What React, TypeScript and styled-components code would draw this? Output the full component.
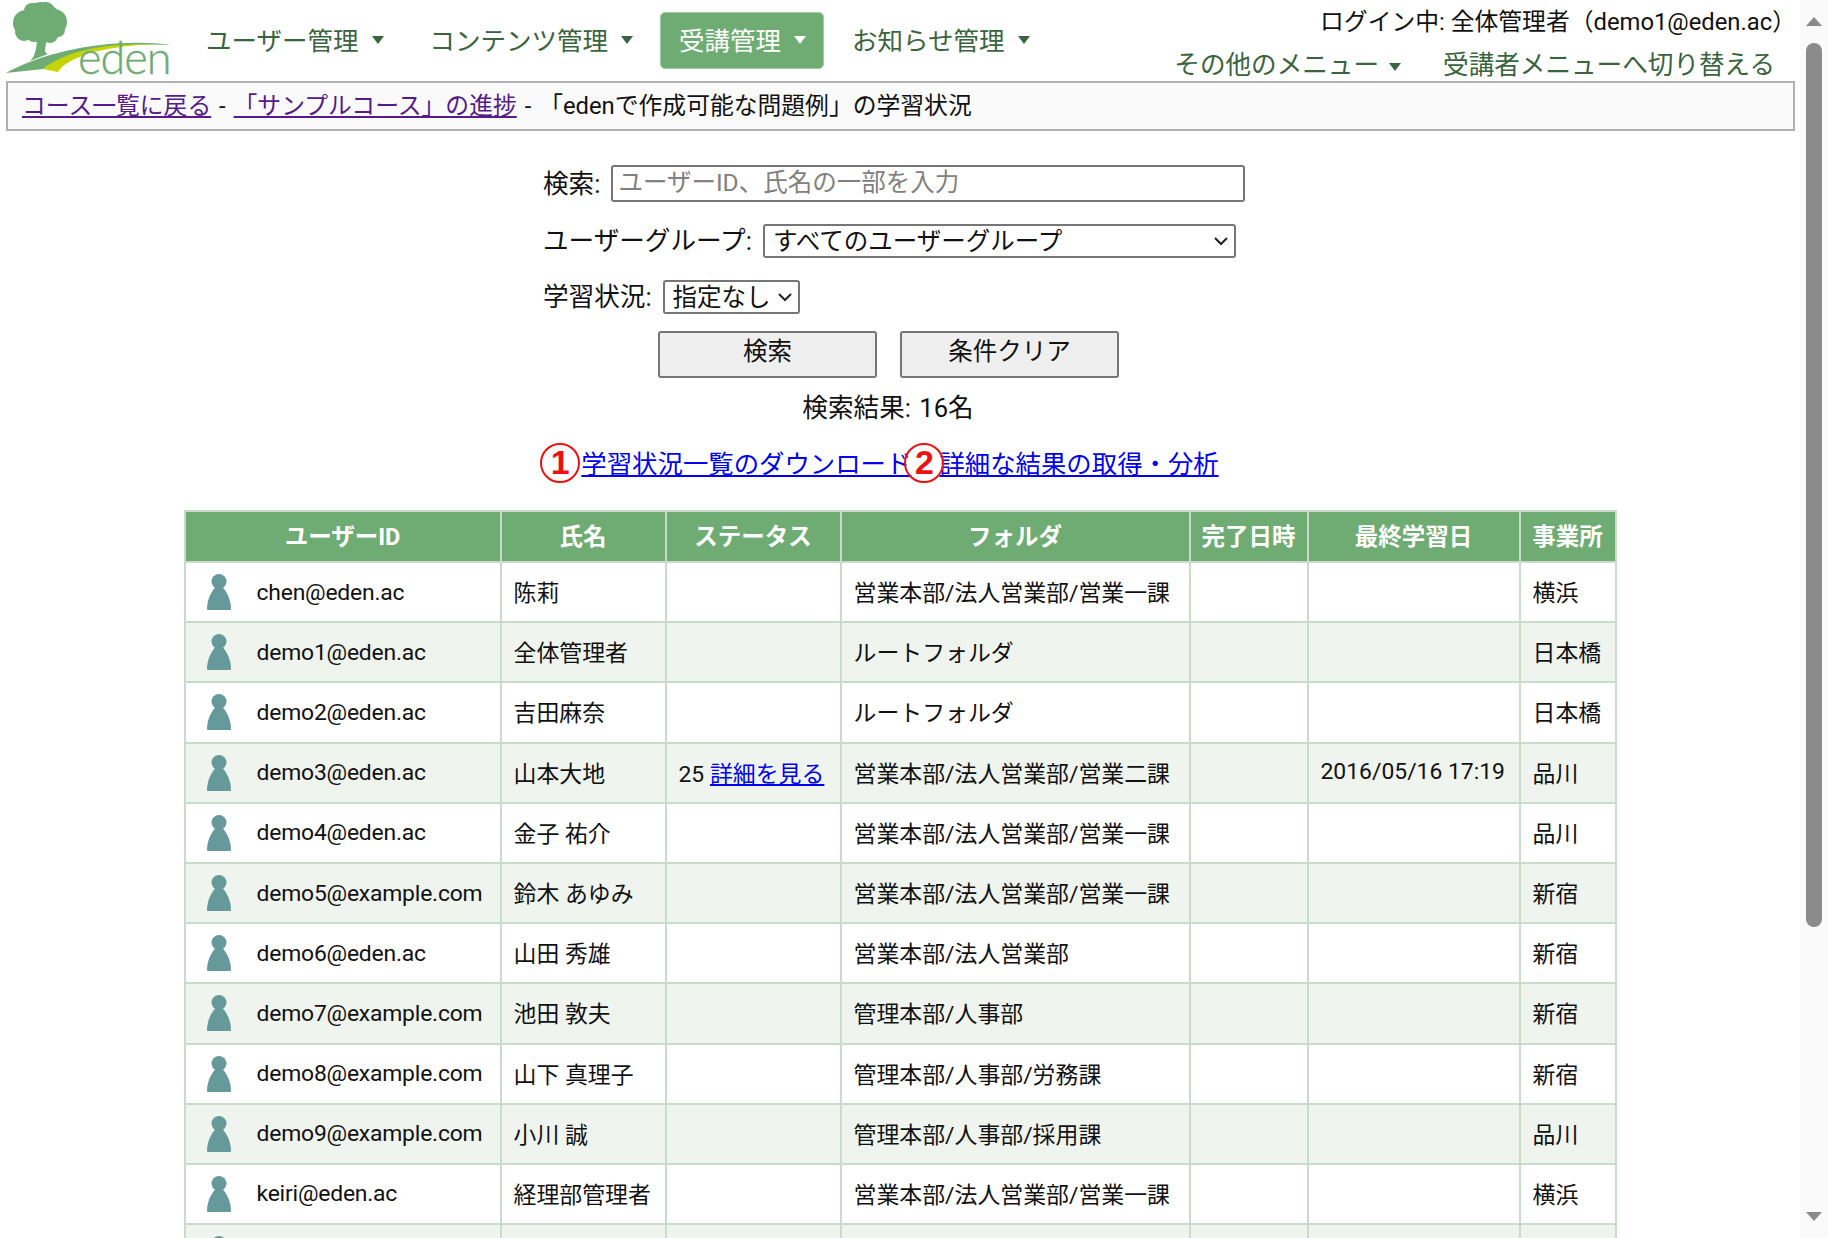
import React from 'react';
import styled, { createGlobalStyle } from 'styled-components';

const GlobalStyle = createGlobalStyle`
  html, body {
    margin: 0;
    height: 100%;
    overflow: hidden;
    background: #fff;
  }
  body {
    font-family: Roboto, "Noto Sans CJK JP", sans-serif;
    color: #111;
  }
`;

const Page = styled.div`
  display: flex;
  width: 1828px;
  height: 1238px;
  overflow: hidden;
`;

const Main = styled.main`
  width: 1800px;
  flex: none;
`;

const Header = styled.header`
  display: flex;
  height: 81px;
  box-sizing: border-box;
`;

const LogoWrap = styled.div`
  width: 187px;
  flex: none;
  line-height: 0;
`;

const Nav = styled.nav`
  display: flex;
  gap: 9px;
  padding-top: 12px;
`;

const NavItem = styled.a<{ $active?: boolean }>`
  display: flex;
  align-items: center;
  gap: 13px;
  height: 57px;
  box-sizing: border-box;
  padding: 0 17px 4px 18px;
  border-radius: 5px;
  font-size: 25.5px;
  color: ${(p) => (p.$active ? '#fff' : '#3a6340')};
  background: ${(p) => (p.$active ? '#6fac73' : 'transparent')};
  border: 1px solid ${(p) => (p.$active ? '#a5cba8' : 'transparent')};
`;

const Caret = styled.span`
  width: 0;
  height: 0;
  border-left: 6.5px solid transparent;
  border-right: 6.5px solid transparent;
  border-top: 8px solid currentColor;
  margin-top: 3px;
`;

const UserArea = styled.div`
  margin-left: auto;
  display: flex;
  flex-direction: column;
  align-items: flex-end;
  padding-top: 5px;
  padding-right: 4px;
`;

const LoginText = styled.div`
  font-size: 23.8px;
  line-height: 34px;
`;

const SubNav = styled.div`
  display: flex;
  align-items: center;
  gap: 42px;
  padding-right: 21px;
  margin-top: 7px;
  font-size: 25.6px;
  line-height: 38px;
  color: #3a6340;
`;

const SubNavItem = styled.a`
  display: flex;
  align-items: center;
  gap: 10px;
`;

const Breadcrumb = styled.div`
  margin: 0 5px 0 6px;
  height: 50px;
  box-sizing: border-box;
  border: 2px solid #b0b0b0;
  background: #fafafa;
  padding-left: 14px;
  font-size: 23.8px;
  word-spacing: 2px;
  line-height: 46px;
`;

const CrumbLink = styled.a`
  color: #551a8b;
  text-decoration: underline;
`;

const Form = styled.form`
  display: flex;
  flex-direction: column;
  align-items: flex-start;
  margin: 34px 0 0 543px;
  width: 740px;
  font-size: 25.6px;
  line-height: 32px;
`;

const Field = styled.label<{ $gap: number }>`
  display: flex;
  align-items: center;
  gap: 11px;
  white-space: nowrap;
  margin-bottom: ${(p) => p.$gap}px;
`;

const SearchInput = styled.input`
  flex: none;
  width: 634px;
  height: 37px;
  box-sizing: border-box;
  border: 2px solid #767676;
  border-radius: 3px;
  padding: 0 5px 2px;
  font: inherit;
  font-size: 24.5px;
  &::placeholder {
    color: #808080;
  }
`;

const chevron =
  "url(\"data:image/svg+xml,%3Csvg xmlns='http://www.w3.org/2000/svg' width='14' height='9'%3E%3Cpath d='M1 1l6 6 6-6' fill='none' stroke='%23222' stroke-width='2'/%3E%3C/svg%3E\")";

const Select = styled.select<{ $w: number }>`
  appearance: none;
  flex: none;
  width: ${(p) => p.$w}px;
  height: 34px;
  box-sizing: border-box;
  border: 2px solid #767676;
  border-radius: 3px;
  background: #fff ${chevron} no-repeat right 6px center;
  font: inherit;
  font-size: 24.5px;
  color: #111;
  padding: 0 4px 3px 8px;
`;

const Buttons = styled.div`
  display: flex;
  gap: 23px;
  margin-left: 115px;
`;

const Button = styled.button`
  width: 219px;
  height: 47px;
  box-sizing: border-box;
  background: #efefef;
  border: 2px solid #767676;
  border-radius: 3px;
  font: inherit;
  font-size: 24.5px;
  color: #111;
  padding: 0 0 6px;
`;

const ResultCount = styled.div`
  width: 1776px;
  text-align: center;
  margin-top: 13px;
  font-size: 25.6px;
  word-spacing: 2px;
  line-height: 34px;
`;

const Links = styled.div`
  display: flex;
  justify-content: center;
  gap: 28px;
  margin-top: 19px;
  font-size: 25.4px;
  line-height: 40px;
`;

const DownloadLink = styled.a`
  position: relative;
  color: #0000ee;
  text-decoration: underline;
`;

const Marker = styled.span<{ $left: number }>`
  position: absolute;
  left: ${(p) => p.$left}px;
  top: -1px;
  width: 40px;
  height: 40px;
  box-sizing: border-box;
  border: 2px solid #ee1111;
  border-radius: 50%;
  background: transparent;
  color: #ee1111;
  font-family: "Liberation Sans", sans-serif;
  font-size: 34px;
  font-weight: 700;
  line-height: 35px;
  text-align: center;
`;

const Table = styled.table`
  margin: 26px auto 0;
  width: 1431px;
  table-layout: fixed;
  border-collapse: collapse;
  font-size: 22.9px;
`;

const Th = styled.th`
  height: 45px;
  padding: 0 0 4px;
  background: #6fac73;
  color: #fff;
  font-size: 23.5px;
  font-weight: 700;
  border: 2px solid #c9dccb;
  text-align: center;
`;

const Row = styled.tr<{ $even: boolean }>`
  background: ${(p) => (p.$even ? '#eff4ef' : '#fff')};
`;

const Td = styled.td`
  height: 56.2px;
  padding: 0 0 2px 12px;
  border: 2px solid #c9dccb;
  white-space: nowrap;
  overflow: hidden;
`;

const UserCell = styled.div`
  display: flex;
  align-items: center;
  gap: 26px;
  padding-left: 9px;
  margin-top: 2px;
  letter-spacing: -0.2px;
`;

const DetailLink = styled.a`
  color: #0000ee;
  text-decoration: underline;
`;

const ScrollTrack = styled.aside`
  width: 28px;
  flex: none;
  background: #fafafa;
  display: flex;
  flex-direction: column;
  align-items: center;
`;

const ScrollArrow = styled.div<{ $down?: boolean }>`
  width: 0;
  height: 0;
  border-left: 8px solid transparent;
  border-right: 8px solid transparent;
  ${(p) =>
    p.$down
      ? 'border-top: 9px solid #8a8a8a; margin-top: auto; margin-bottom: 17px;'
      : 'border-bottom: 9px solid #8a8a8a; margin-top: 17px;'}
`;

const ScrollThumb = styled.div`
  width: 16px;
  height: 884px;
  margin-top: 17px;
  border-radius: 8px;
  background: #8b8b8b;
`;

const Logo = () => (
  <svg width="180" height="96" viewBox="0 0 180 96">
    <g fill="#6fac73">
      <circle cx="41" cy="22" r="20" />
      <circle cx="26" cy="23" r="13" />
      <circle cx="54" cy="22" r="13" />
      <circle cx="32" cy="11" r="8" />
      <circle cx="46" cy="10" r="8" />
      <circle cx="24" cy="32" r="9" />
      <circle cx="34" cy="34" r="8" />
      <circle cx="50" cy="35" r="8" />
      <circle cx="58" cy="30" r="7" />
      <path d="M37 36 L47 36 L45 50 Q45 53 48 54 L30 61 Q37 55 37 36Z" />
      <path d="M6 73 C30 60 60 50 100 45 C125 42 150 42 171 45 C140 43 100 46 78 53 C62 58 50 64 43 69Z" />
    </g>
    <path
      d="M43 69 C55 59 75 51 100 47 C122 44 142 44 156 44 C130 45 100 49 84 55 C72 60 62 65 58 72Z"
      fill="#c3d500"
    />
    <text
      x="78"
      y="74"
      fontFamily="Lato, sans-serif"
      fontWeight="300"
      fontSize="45"
      letterSpacing="-1"
      stroke="#6fac73"
      strokeWidth="0.4"
      fill="#6fac73"
    >
      eden
    </text>
  </svg>
);

const PersonIcon = () => (
  <svg width="24" height="36" viewBox="0 0 24 36">
    <circle cx="12" cy="7.5" r="7.5" fill="#669999" />
    <path d="M12 10 C18 14 24 24 24 35 Q24 36 23 36 L1 36 Q0 36 0 35 C0 24 6 14 12 10Z" fill="#669999" />
  </svg>
);

type UserRow = {
  id: string;
  name: string;
  status?: string;
  folder: string;
  last?: string;
  office: string;
};

const HQ = '営業本部/法人営業部';

const users: UserRow[] = [
  { id: 'chen@eden.ac', name: '陈莉', folder: `${HQ}/営業一課`, office: '横浜' },
  { id: 'demo1@eden.ac', name: '全体管理者', folder: 'ルートフォルダ', office: '日本橋' },
  { id: 'demo2@eden.ac', name: '吉田麻奈', folder: 'ルートフォルダ', office: '日本橋' },
  { id: 'demo3@eden.ac', name: '山本大地', status: '25', folder: `${HQ}/営業二課`, last: '2016/05/16 17:19', office: '品川' },
  { id: 'demo4@eden.ac', name: '金子 祐介', folder: `${HQ}/営業一課`, office: '品川' },
  { id: 'demo5@example.com', name: '鈴木 あゆみ', folder: `${HQ}/営業一課`, office: '新宿' },
  { id: 'demo6@eden.ac', name: '山田 秀雄', folder: HQ, office: '新宿' },
  { id: 'demo7@example.com', name: '池田 敦夫', folder: '管理本部/人事部', office: '新宿' },
  { id: 'demo8@example.com', name: '山下 真理子', folder: '管理本部/人事部/労務課', office: '新宿' },
  { id: 'demo9@example.com', name: '小川 誠', folder: '管理本部/人事部/採用課', office: '品川' },
  { id: 'keiri@eden.ac', name: '経理部管理者', folder: `${HQ}/営業一課`, office: '横浜' },
  { id: '', name: '', folder: '', office: '' },
];

const columns = [
  { label: 'ユーザーID', width: 316 },
  { label: '氏名', width: 165 },
  { label: 'ステータス', width: 175 },
  { label: 'フォルダ', width: 349 },
  { label: '完了日時', width: 118 },
  { label: '最終学習日', width: 212 },
  { label: '事業所', width: 96 },
];

const App = () => (
  <Page>
    <GlobalStyle />
    <Main>
      <Header>
        <LogoWrap>
          <Logo />
        </LogoWrap>
        <Nav>
          <NavItem>ユーザー管理<Caret /></NavItem>
          <NavItem>コンテンツ管理<Caret /></NavItem>
          <NavItem $active>受講管理<Caret /></NavItem>
          <NavItem>お知らせ管理<Caret /></NavItem>
        </Nav>
        <UserArea>
          <LoginText>ログイン中: 全体管理者（demo1@eden.ac）</LoginText>
          <SubNav>
            <SubNavItem>その他のメニュー<Caret /></SubNavItem>
            <SubNavItem>受講者メニューへ切り替える</SubNavItem>
          </SubNav>
        </UserArea>
      </Header>

      <Breadcrumb>
        <CrumbLink>コース一覧に戻る</CrumbLink> - <CrumbLink>「サンプルコース」の進捗</CrumbLink> - 「edenで作成可能な問題例」の学習状況
      </Breadcrumb>

      <Form>
        <Field $gap={22}>
          検索:
          <SearchInput placeholder="ユーザーID、氏名の一部を入力" />
        </Field>
        <Field $gap={22}>
          ユーザーグループ:
          <Select $w={473}>
            <option>すべてのユーザーグループ</option>
          </Select>
        </Field>
        <Field $gap={17}>
          学習状況:
          <Select $w={137}>
            <option>指定なし</option>
          </Select>
        </Field>
        <Buttons>
          <Button type="button">検索</Button>
          <Button type="button">条件クリア</Button>
        </Buttons>
      </Form>

      <ResultCount>検索結果: 16名</ResultCount>

      <Links>
        <DownloadLink>
          <Marker $left={-41}>1</Marker>
          学習状況一覧のダウンロード
        </DownloadLink>
        <DownloadLink>
          <Marker $left={-35}>2</Marker>
          詳細な結果の取得・分析
        </DownloadLink>
      </Links>

      <Table>
        <colgroup>
          {columns.map((c) => (
            <col key={c.label} width={c.width} />
          ))}
        </colgroup>
        <thead>
          <tr>
            {columns.map((c) => (
              <Th key={c.label}>{c.label}</Th>
            ))}
          </tr>
        </thead>
        <tbody>
          {users.map((u, i) => (
            <Row key={u.id || i} $even={i % 2 === 1}>
              <Td>
                <UserCell>
                  <PersonIcon />
                  {u.id}
                </UserCell>
              </Td>
              <Td>{u.name}</Td>
              <Td>
                {u.status && (
                  <>
                    {u.status} <DetailLink>詳細を見る</DetailLink>
                  </>
                )}
              </Td>
              <Td>{u.folder}</Td>
              <Td />
              <Td>{u.last}</Td>
              <Td>{u.office}</Td>
            </Row>
          ))}
        </tbody>
      </Table>
    </Main>
    <ScrollTrack>
      <ScrollArrow />
      <ScrollThumb />
      <ScrollArrow $down />
    </ScrollTrack>
  </Page>
);

export default App;
